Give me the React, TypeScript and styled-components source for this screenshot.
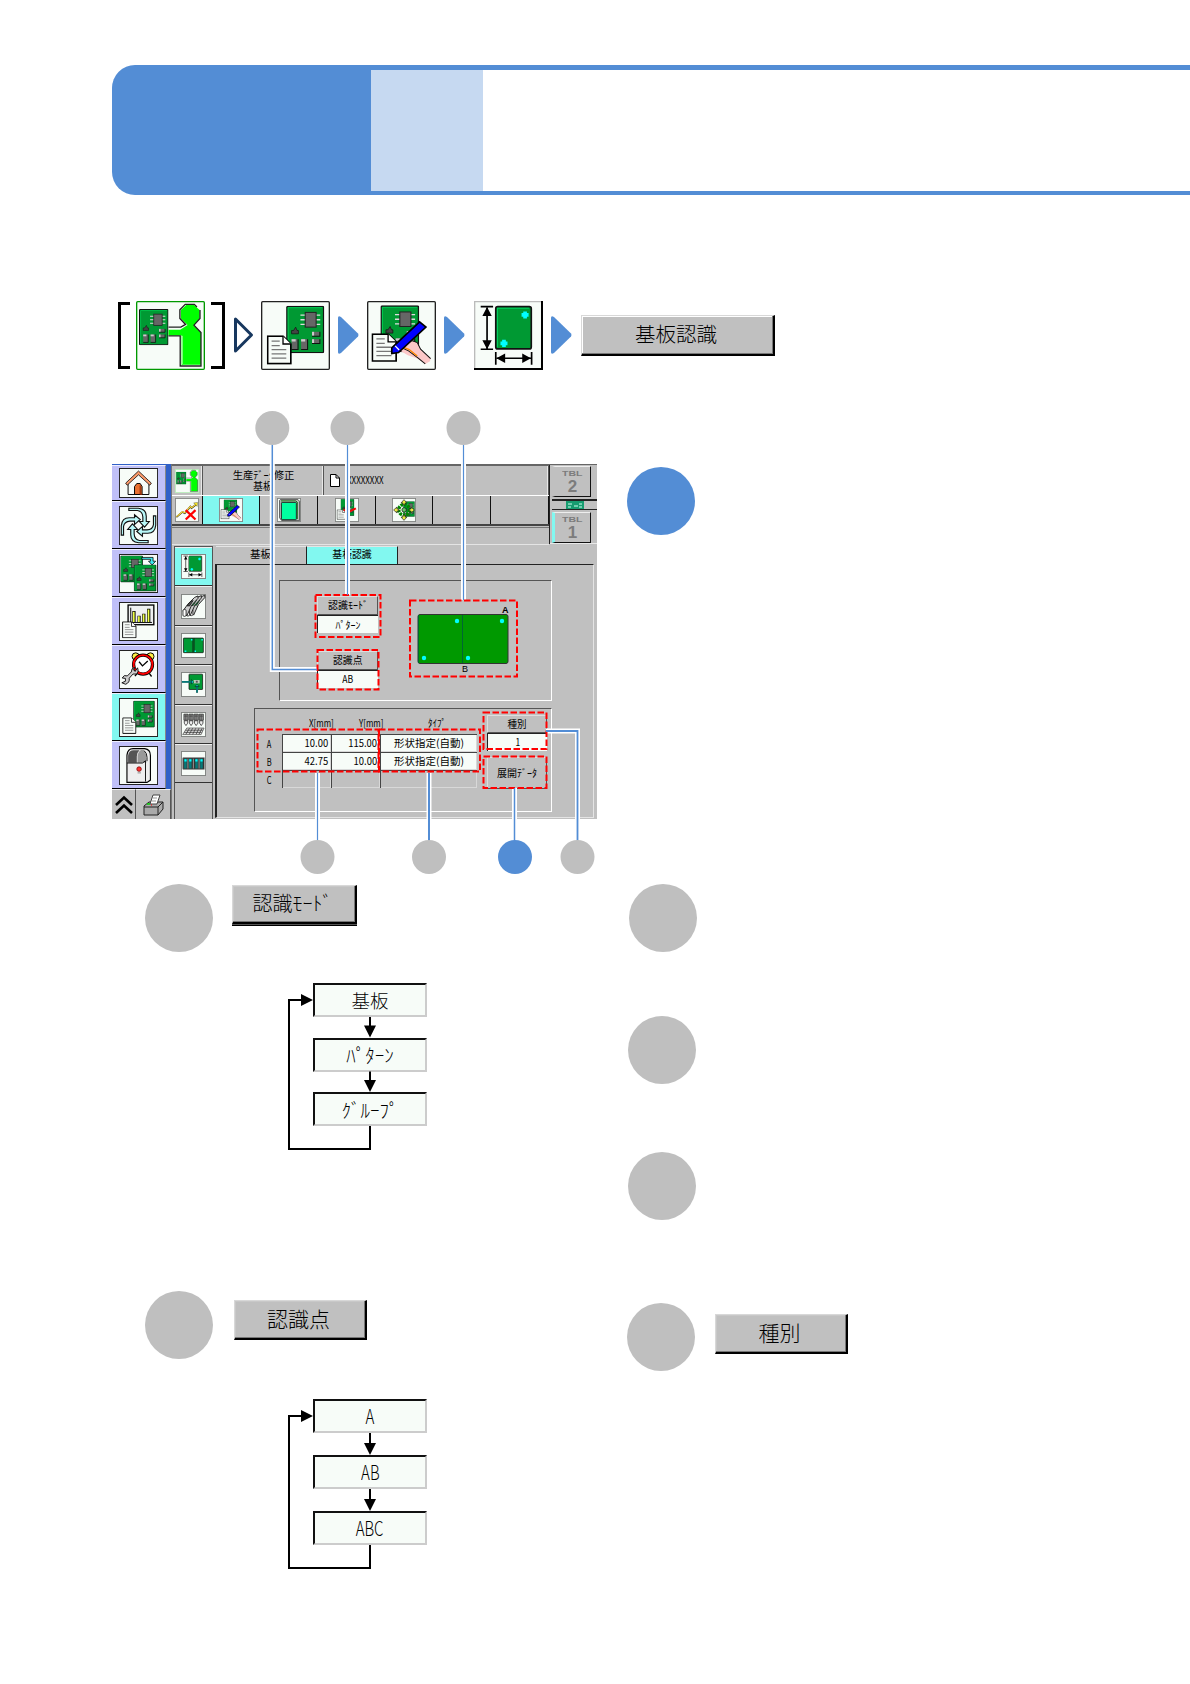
import React from "react";
import styled, { createGlobalStyle } from "styled-components";

const BLUE = "#538dd5";
const GRAY = "#bfbfbf";
const CYAN = "#82f8f0";
const PAPER = "#f7fcf8";

const Global = createGlobalStyle`
  * { box-sizing: border-box; }
  body { margin: 0; background: #fff; }
  svg { display: block; }
`;

const Page = styled.main`
  width: 1190px;
  height: 1684px;
  padding-top: 65px;
  overflow: hidden;
  background: #fff;
  color: #000;
  font-family: "Liberation Sans", "Noto Sans CJK JP", sans-serif;
`;

const Header = styled.header`
  display: flex;
  height: 130px;
  margin-left: 112px;
  border-radius: 23px 0 0 23px;
  overflow: hidden;
`;
const HeaderBlock = styled.div<{ $w: number }>`
  width: ${(p) => p.$w}px;
  background: ${BLUE};
`;
const HeaderStrip = styled.div`
  flex: 1;
  display: flex;
  border: solid ${BLUE};
  border-width: 5px 0 4px;
`;
const HeaderTint = styled.div`
  width: 112px;
  background: #c6d9f1;
`;

const Trail = styled.nav`
  display: flex;
  align-items: center;
  height: 70px;
  margin: 105px 0 0 118px;
`;
const Bracket = styled.span`
  width: 12px;
  height: 67px;
  border: 3px solid #000;
  border-right: 0;
`;
const CloseBracket = styled.span`
  width: 14px;
  height: 67px;
  margin-left: 6px;
  border: 3px solid #000;
  border-left: 0;
`;
const Slot = styled.span<{ $l: number }>`
  margin-left: ${(p) => p.$l}px;
`;

const Raised = styled.button<{ $w: number; $h: number; $deep?: boolean }>`
  display: flex;
  align-items: center;
  justify-content: center;
  width: ${(p) => p.$w}px;
  height: ${(p) => p.$h}px;
  padding: 0 3px 2px 0;
  border: solid #000;
  border-width: 1px 2px 2px 1px;
  border-top-color: #d8d8d8;
  border-left-color: #d8d8d8;
  background: #c0c0c0;
  box-shadow: inset -1px -1px 0 #777, inset 1px 1px 0 ${(p) => (p.$deep ? "#fff" : "#c8c8c8")};
  font: inherit;
  color: #000;
`;

const T = styled.span<{ $s: number; $x?: number; $o?: string; $b?: boolean }>`
  display: inline-block;
  flex: none;
  font-size: ${(p) => p.$s}px;
  font-weight: ${(p) => (p.$b ? 700 : p.$s < 12 ? 400 : 300)};
  line-height: 1;
  white-space: nowrap;
  font-family: ${(p) => (p.$b ? "" : '"Noto Sans CJK JP", ')}"Liberation Sans", sans-serif;
  transform: scaleX(${(p) => p.$x ?? 1});
  transform-origin: ${(p) => p.$o ?? "center"};
`;

const Columns = styled.div`
  display: grid;
  grid-template-columns: 516px 1fr;
  padding-left: 111px;
  margin-top: 41px;
`;
const Column = styled.div`
  display: flex;
  flex-direction: column;
`;
const Figure = styled.figure`
  position: relative;
  height: 463px;
  margin: 0;
  padding-top: 53px;
`;
const Overlay = styled.svg`
  position: absolute;
  left: 0;
  top: 0;
`;

const Screen = styled.section`
  display: flex;
  width: 485px;
  height: 355px;
  margin-left: 1px;
  background: #c0c0c0;
`;
const MainNav = styled.div`
  width: 59px;
  background: #3060c8;
  padding-top: 1px;
`;
const NavCell = styled.div<{ $h: number; $on?: boolean }>`
  display: flex;
  align-items: center;
  justify-content: center;
  width: 54px;
  height: ${(p) => p.$h}px;
  padding-right: 1px;
  border-bottom: 1px solid #000;
  border-top: 1px solid #eef;
  border-right: 1px solid #888;
  background: ${(p) => (p.$on ? CYAN : "#c0c0f8")};
`;
const NavFoot = styled.div`
  display: grid;
  grid-template-columns: 24px 35px;
  height: 30px;
  background: #c0c0c0;
`;
const FootCell = styled.div`
  display: flex;
  align-items: center;
  justify-content: center;
  border-right: 1px solid #555;
  border-top: 1px solid #eee;
`;
const Main = styled.div`
  flex: 1;
  min-width: 0;
  border-top: 1px solid #666;
  border-left: 1px solid #777;
`;
const Top = styled.div`
  display: flex;
  height: 79px;
`;
const TopLeft = styled.div`
  width: 378px;
  border-right: 1px solid #222;
`;
const TitleRow = styled.div`
  display: grid;
  grid-template-columns: 31px 121px 1fr;
  height: 31px;
  border-top: 1px solid #666;
  border-bottom: 1px solid #fff;
`;
const TitleCell = styled.div<{ $start?: boolean }>`
  display: flex;
  flex-direction: ${(p) => (p.$start ? "row" : "column")};
  align-items: center;
  justify-content: ${(p) => (p.$start ? "flex-start" : "center")};
  gap: ${(p) => (p.$start ? 7 : 0)}px;
  padding-left: ${(p) => (p.$start ? 6 : 0)}px;
  border-right: 1px solid #555;
  box-shadow: inset -1px 0 0 #e8e8e8;
`;
const Tools = styled.div`
  display: grid;
  grid-template-columns: 31px 57px 58px 58px 57px 58px 1fr;
  height: 30px;
  border-bottom: 2px solid #444;
`;
const Tool = styled.div<{ $on?: boolean }>`
  display: flex;
  align-items: center;
  justify-content: center;
  border-right: 1px solid #111;
  background: ${(p) => (p.$on ? CYAN : "#c0c0c0")};
`;
const Message = styled.div`
  height: 18px;
  margin-top: 1px;
  border-top: 1px solid #777;
  border-bottom: 1px solid #e4e4e4;
`;
const Tables = styled.div`
  flex: 1;
  border-bottom: 1px solid #e8e8e8;
  padding-left: 2px;
`;
const TableKey = styled.div<{ $on?: boolean }>`
  display: flex;
  flex-direction: column;
  align-items: center;
  width: 39px;
  height: 31px;
  margin-top: 1px;
  padding-top: 3px;
  border: solid #111;
  border-width: 1px 1px 1px 3px;
  border-top-color: #eee;
  border-left-color: ${(p) => (p.$on ? CYAN : "#c0c0c0")};
  color: #7c7c7c;
`;
const TableBar = styled.div`
  display: flex;
  justify-content: center;
  height: 11px;
  margin: 2px 0;
  border: solid #222;
  border-width: 2px 0 1px;
`;
const Body = styled.div`
  display: flex;
  height: 275px;
`;
const SubNav = styled.div`
  width: 39px;
  margin: 2px 2px 0 2px;
  border: solid #555;
  border-width: 1px 1px 0 1px;
`;
const SubCell = styled.div<{ $on?: boolean }>`
  display: flex;
  align-items: center;
  justify-content: center;
  height: 39.4px;
  border-bottom: 1px solid #333;
  border-top: 1px solid #eee;
  background: ${(p) => (p.$on ? CYAN : "#c0c0c0")};
`;
const Work = styled.div`
  width: 380px;
  padding-top: 2px;
`;
const Tabs = styled.div`
  display: flex;
  height: 18px;
  padding-left: 1px;
`;
const Tab = styled.div<{ $on?: boolean }>`
  display: flex;
  align-items: center;
  justify-content: center;
  width: 91px;
  padding: 0 1px 2px 0;
  border-top: 1px solid #e4e4e4;
  border-right: 1px solid #222;
  background: ${(p) => (p.$on ? CYAN : "#c0c0c0")};
`;
const Panel = styled.div`
  height: 254px;
  width: 379px;
  border: solid #222;
  border-width: 1px 1px 1px 2px;
  border-right-color: #e4e4e4;
  border-bottom-color: #e4e4e4;
  padding-top: 15px;
`;
const Frame = styled.div<{ $l: number; $w: number; $h: number; $t?: number }>`
  display: flex;
  width: ${(p) => p.$w}px;
  height: ${(p) => p.$h}px;
  margin: ${(p) => p.$t ?? 0}px 0 0 ${(p) => p.$l}px;
  border: 1px solid #555;
  border-right-color: #fff;
  border-bottom-color: #fff;
`;
const Settings = styled.div`
  display: flex;
  flex-direction: column;
  gap: 18px;
  margin: 15px 0 0 37px;
`;
const Setting = styled.div<{ $w: number }>`
  width: ${(p) => p.$w}px;
`;
const SettingKey = styled.div<{ $h?: number }>`
  display: flex;
  align-items: center;
  justify-content: center;
  height: ${(p) => p.$h ?? 19}px;
  border: 1px solid #555;
  border-top-color: #ddd;
  border-left-color: #ddd;
`;
const SettingValue = styled.div`
  display: flex;
  align-items: center;
  justify-content: center;
  height: 18px;
  border: solid #222;
  border-width: 1px 0 0 1px;
  background: ${PAPER};
`;
const Board = styled.svg`
  margin: 21px 0 0 36px;
`;
const Grid = styled.div`
  display: grid;
  grid-template-columns: 27px 49px 49px 97px;
  grid-template-rows: 25px 18px 18px 18px;
`;
const Cell = styled.div<{ $fill?: boolean; $box?: boolean; $end?: boolean }>`
  display: flex;
  align-items: center;
  justify-content: ${(p) => (p.$end ? "flex-end" : "center")};
  padding-right: ${(p) => (p.$end ? 3 : 0)}px;
  background: ${(p) => (p.$fill ? PAPER : "transparent")};
  border: solid ${(p) => (p.$box ? "#444" : "transparent")};
  border-width: 1px 0 0 1px;
  box-shadow: ${(p) => (p.$box ? "inset -1px -1px 0 #d8d8d8" : "none")};
`;
const HeadCell = styled.div<{ $l: number }>`
  display: flex;
  align-items: center;
  padding: 3px 0 0 ${(p) => p.$l}px;
`;
const Side = styled.div`
  display: flex;
  flex-direction: column;
  gap: 6px;
  margin: 6px 0 0 10px;
`;

const Section = styled.section<{ $t?: number; $l: number }>`
  display: flex;
  margin: ${(p) => p.$t ?? 0}px 0 0 ${(p) => p.$l}px;
`;
const Disc = styled.i<{ $c?: string }>`
  flex: none;
  width: 68px;
  height: 68px;
  border-radius: 50%;
  background: ${(p) => p.$c ?? GRAY};
`;
const Offset = styled.div<{ $l: number; $t: number }>`
  margin: ${(p) => p.$t}px 0 0 ${(p) => p.$l}px;
`;
const DoubleEdge = styled.div`
  height: 41px;
  background: #555;
  border-bottom: 1px solid #000;
`;
const Cycle = styled.div<{ $t: number; $g: number }>`
  position: relative;
  display: flex;
  flex-direction: column;
  gap: ${(p) => p.$g}px;
  margin: ${(p) => p.$t}px 0 0 202px;
`;
const Step = styled.div`
  display: flex;
  align-items: center;
  justify-content: center;
  width: 114px;
  height: 34px;
  border: 2px solid #111;
  border-right-color: #ccc;
  border-bottom-color: #ccc;
  background: ${PAPER};
`;
const CycleArrows = styled.svg`
  position: absolute;
  left: -30px;
  top: 0;
  overflow: visible;
`;

/* ---------- icons ---------- */

function Pcb({ x, y, w, h }: { x: number; y: number; w: number; h: number }) {
  const parts = [[76, 78, 22, 12], [76, 100, 22, 12], [16, 100, 18, 30], [44, 100, 18, 30]];
  return (
    <svg x={x} y={y} width={w} height={h} viewBox="0 0 112 142" preserveAspectRatio="none">
      <rect x="2" y="2" width="108" height="138" rx="3" fill="#009933" stroke="#111" strokeWidth="4" />
      <path d="M6 136V6H106" fill="none" stroke="#00e060" strokeWidth="2" />
      <path d="M42 28H100M42 42H100M42 56H100" stroke="#ddd" strokeWidth="4" />
      <rect x="56" y="20" width="32" height="44" fill="#666" stroke="#222" strokeWidth="3" />
      <path d="M16 84V74H22L28 64L32 74H36V84Z" fill="#444" stroke="#111" strokeWidth="2" />
      {parts.map(([a, b, c, d]) => (
        <g key={`${a}-${b}`}>
          <rect x={a} y={b} width={c} height={d} fill="#666" />
          <rect x={a} y={b} width={c > d ? 6 : c - 6} height={c > d ? d : 7} fill="#ccc" />
          <path d={`M${a} ${b + d + 1}H${a + c + 1}V${b}`} fill="none" stroke="#111" strokeWidth="3" />
        </g>
      ))}
    </svg>
  );
}

function Doc({ x, y, w, h }: { x: number; y: number; w: number; h: number }) {
  return (
    <svg x={x} y={y} width={w} height={h} viewBox="0 0 78 90" preserveAspectRatio="none">
      <path d="M3 3H50L74 27V87H3Z" fill={PAPER} stroke="#000" strokeWidth="5" />
      <path d="M50 3V27H74" fill="#fff" stroke="#000" strokeWidth="4" />
      <path d="M15 18H40M15 32H40M15 44H60M15 57H60M15 70H60" stroke="#777" strokeWidth="4" />
    </svg>
  );
}

function Tile({ size, h, children, kind = "thin" }: { size: number; h?: number; children?: React.ReactNode; kind?: string }) {
  const edge = kind === "green" ? "#009900" : kind === "pale" ? "#88e088" : "#222";
  const hh = h ? (206 * h) / size : 206;
  return (
    <svg width={size} height={h ?? size} viewBox={`0 0 206 ${hh}`}>
      <rect width="206" height={hh} fill={PAPER} />
      {children}
      {kind === "raised" ? (
        <>
          <path d={`M2 ${hh}V2H206`} fill="none" stroke="#bbb" strokeWidth="4" />
          <path d={`M0 ${hh - 3}H203V0`} fill="none" stroke="#000" strokeWidth="6" />
        </>
      ) : (
        <rect x="2" y="2" width="202" height={hh - 4} rx="3" fill="none" stroke={edge} strokeWidth={size > 50 ? 4 : 6} />
      )}
    </svg>
  );
}

const Operator = () => (
  <>
    <Pcb x={9} y={24} w={88} h={108} />
    <path d="M97 86H132L154 72L134 52V27L150 12H173L190 27V52L172 73L194 94V190H136V103H97Z" fill="#0f0" />
    <path d="M97 78H134L148 70L131 52V26L147 10H174L182 18M97 104H132V194H194V94L173 72L191 52V27" fill="none" stroke="#222" strokeWidth="4" />
    <path d="M138 188V104" stroke="#fff" strokeWidth="2" />
  </>
);
const PcbDoc = () => (
  <>
    <Pcb x={75} y={14} w={114} h={142} />
    <Doc x={17} y={102} w={76} h={88} />
  </>
);
const Edit = () => (
  <>
    <Pcb x={40} y={13} w={116} h={140} />
    <Doc x={13} y={96} w={78} h={86} />
    <path d="M93 136L112 132L134 120L150 124L160 144L190 172L188 180L174 188L150 172L122 162L98 148Z" fill="#fcc8c8" />
    <path d="M96 136L124 149L152 170L174 188M136 119L150 124L160 144L190 172" fill="none" stroke="#111" strokeWidth="3" />
    <path d="M98 134L126 145L150 164" fill="none" stroke="#f80" strokeWidth="4" />
    <path d="M157 62L176 78L94 154L74 157V140Z" fill="#00f" stroke="#000" strokeWidth="5" />
    <path d="M84 134L96 146" stroke="#fff" strokeWidth="4" />
  </>
);
const Dimensions = () => (
  <>
    <rect x="65" y="17" width="106" height="126" rx="6" fill="#009933" stroke="#111" strokeWidth="5" />
    <path d="M70 138V22H164" fill="none" stroke="#00d060" strokeWidth="3" />
    <path d="M147 31H158V36H163V47H158V52H147V47H142V36H147ZM84 116H95V121H100V132H95V137H84V132H79V121H84Z" fill="#0ff" />
    <path d="M20 17H57M20 144H57M39 20V142M65 152V190M172 152V190M68 171H170" stroke="#000" strokeWidth="5" />
    <path d="M39 18L53 45H25ZM39 144L53 117H25ZM67 171L93 157V185ZM170 171L144 157V185Z" fill="#000" />
  </>
);
const Home = () => (
  <>
    <path d="M48 85V140H158V85" fill={PAPER} stroke="#000" strokeWidth="5" />
    <path d="M103 16L171 80L163 91L103 36L43 91L35 80Z" fill="#fb9a6a" stroke="#000" strokeWidth="4" />
    <path d="M82 140V98L94 82H112L122 98V140Z" fill="#e87030" stroke="#000" strokeWidth="5" />
    <path d="M112 92V140H122" fill="none" stroke="#852000" strokeWidth="5" />
  </>
);
const Arrows = () => (
  <>
    {[0, 90, 180, 270].map((r) => (
      <path key={r} transform={`rotate(${r} 103 103)`} d="M52 12H102Q144 16 144 54V82H160L135 112L108 82H126V58Q124 28 98 24H52Z" fill="#b8f8f8" stroke="#111" strokeWidth="6" />
    ))}
  </>
);
const Copy = () => (
  <>
    <Pcb x={7} y={8} w={120} h={142} />
    <Pcb x={78} y={56} w={120} h={142} />
    <path d="M120 18H180V38H194L175 58L156 38H166V28H120Z" fill="#3fe8f0" stroke="#000" strokeWidth="4" />
  </>
);
const Report = () => (
  <>
    <rect x="48" y="16" width="136" height="104" fill="#eef0f0" stroke="#000" strokeWidth="7" />
    <path d="M62 30V108H174" fill="none" stroke="#000" strokeWidth="5" />
    <path d="M79 107V48M106 107V72M131 107V62M157 107V36" stroke="#000" strokeWidth="17" />
    <path d="M78 105V51M105 105V75M130 105V65M156 105V39" stroke="#ef4" strokeWidth="9" />
    <Doc x={16} y={102} w={78} h={90} />
  </>
);
const Maintenance = () => (
  <>
    <circle cx="88" cy="34" r="19" fill="#fe4" stroke="#000" strokeWidth="5" />
    <circle cx="166" cy="34" r="19" fill="#fe4" stroke="#000" strokeWidth="5" />
    <circle cx="127" cy="77" r="50" fill="#fff" stroke="#000" strokeWidth="17" />
    <circle cx="127" cy="77" r="50" fill="none" stroke="#f00" strokeWidth="10" />
    <path d="M106 62L124 84L152 58M96 124L84 138M160 124L172 140" fill="none" stroke="#000" strokeWidth="7" />
    <path d="M98 94Q106 118 91 127L74 127L54 149Q58 172 35 181L15 173L34 165L34 150L17 148Q26 128 44 137L65 116Q64 95 84 92L77 105L85 113Z" fill="#ccc" stroke="#111" strokeWidth="5" />
  </>
);
const Machine = () => (
  <>
    <path d="M42 48Q46 14 74 14H136Q166 18 166 50V180L148 192H42Z" fill="#eee" stroke="#000" strokeWidth="6" />
    <path d="M48 88V50Q52 22 78 22H108Q94 34 94 56V88Z" fill="#555" />
    <path d="M98 88V52Q104 22 122 20Q142 24 144 56V88Z" fill="#999" />
    <path d="M42 90H124L140 78V188M132 24Q148 36 148 60V80" fill="none" stroke="#111" strokeWidth="5" />
    <circle cx="106" cy="122" r="12" fill="#f33" stroke="#700" strokeWidth="4" />
    <path d="M98 142H116" stroke="#888" strokeWidth="5" />
  </>
);
const Analysis = () => (
  <>
    <path d="M12 164L64 120L84 130L132 74L142 86L186 52" fill="none" stroke="#222" strokeWidth="14" />
    <path d="M12 162L64 118L84 128L132 72L142 84L186 50" fill="none" stroke="#fd3" strokeWidth="9" />
    <path d="M160 42L194 38L190 72Z" fill="#fe2" stroke="#222" strokeWidth="3" />
    <path d="M92 104L176 184M176 104L92 184" stroke="#f00" strokeWidth="19" />
  </>
);
const Panels = () => (
  <>
    <path d="M30 12H178L194 28V194H40L22 170V20Z" fill="#bbb" stroke="#222" strokeWidth="6" />
    <path d="M34 25H160L174 36V180" fill="none" stroke="#060" strokeWidth="8" />
    <rect x="38" y="38" width="128" height="148" rx="6" fill="#00ffa0" stroke="#111" strokeWidth="7" />
  </>
);
const Check = () => (
  <>
    <Pcb x={48} y={8} w={118} h={146} />
    <Doc x={14} y={98} w={80} h={88} />
    <path d="M68 102L98 124L92 178L118 126L184 96L174 82L110 116L80 94Z" fill="#f00" />
    <path d="M92 178L99 150" stroke="#222" strokeWidth="7" />
  </>
);
const Optimize = () => (
  <>
    <Pcb x={96} y={28} w={100} h={134} />
    <circle cx="104" cy="102" r="46" fill="none" stroke="#080" strokeWidth="30" strokeDasharray="22 8" />
    {[0, 90, 180, 270].map((r) => (
      <path key={r} transform={`rotate(${r} 103 103)`} d="M103 14L128 42H112V57H94V42H78Z" fill="#ee4" stroke="#222" strokeWidth="6" />
    ))}
    <circle cx="104" cy="102" r="19" fill="#6c6" stroke="#222" strokeWidth="7" />
  </>
);
const Feeders = () => (
  <>
    {[2, 1, 0].map((n) => (
      <g key={n} transform={`translate(${n * 28} ${n * -3})`}>
        <path d="M16 140L56 84L112 28L140 16V36L88 92L48 180Z" fill="#ccc" stroke="#222" strokeWidth="8" />
        <path d="M50 98L76 64L100 54L72 98Z" fill={n === 0 ? "#555" : "#0a3"} stroke="#111" strokeWidth="6" />
        <rect x="16" y="128" width="26" height="56" rx="10" fill="#fff" stroke="#222" strokeWidth="7" />
      </g>
    ))}
  </>
);
const Pattern = () => (
  <>
    <rect x="20" y="42" width="164" height="120" rx="4" fill="#009933" stroke="#111" strokeWidth="6" />
    <path d="M98 44V160M108 44V160" stroke="#111" strokeWidth="6" />
    <path d="M30 144H44V156H30ZM82 50H94V62H82ZM112 144H124V156H112ZM168 50H180V62H168Z" fill="#0ff" />
  </>
);
const Placement = () => (
  <>
    <rect x="66" y="18" width="112" height="126" rx="4" fill="#009933" stroke="#111" strokeWidth="6" />
    <rect x="104" y="66" width="50" height="28" fill="#bcb" />
    <path d="M122 72H138V88H122Z" fill="#555" />
    <path d="M8 82H90M132 170V114" stroke="#111" strokeWidth="15" />
    <path d="M8 82H90M132 170V118" stroke="#0ee" strokeWidth="7" />
    <path d="M86 64L104 82L86 100ZM116 120L132 102L148 120Z" fill="#0ee" stroke="#111" strokeWidth="5" />
  </>
);
const Nozzles = () => (
  <>
    {[24, 66, 108, 150].map((x) => (
      <g key={x} transform={`translate(${x} 0)`}>
        <path d="M0 18H34V68H0Z" fill="#999" stroke="#222" strokeWidth="6" />
        <path d="M16 20V68M3 34H30" stroke="#444" strokeWidth="7" />
        <path d="M3 72H31V92L17 112L3 92Z" fill="#eee" stroke="#222" strokeWidth="6" />
      </g>
    ))}
    <path d="M48 132H190L166 186H14Z" fill="#ddd" stroke="#333" strokeWidth="5" />
    <path d="M36 150H180M26 168H170M70 134L40 184M96 134L68 184M122 134L96 184M148 134L124 184M174 134L148 184" stroke="#333" strokeWidth="6" />
  </>
);
const Conveyor = () => (
  <>
    <rect x="14" y="54" width="180" height="98" rx="6" fill="#333" stroke="#999" strokeWidth="8" />
    <path d="M36 64V144M77 64V144M128 64V144M169 64V144" stroke="#087878" strokeWidth="21" />
    <path d="M57 64V144M102 64V144M149 64V144" stroke="#999" strokeWidth="8" />
    <path d="M28 68H46V86H28ZM68 68H86V86H68ZM118 68H136V86H118ZM160 68H178V86H160Z" fill="#0ff" />
  </>
);

const Triangle = ({ hollow }: { hollow?: boolean }) => (
  <svg width="22" height="40" viewBox="0 0 22 40">
    {hollow ? (
      <path d="M2.5 4V36L18.5 20Z" fill="#fff" stroke="#17375e" strokeWidth="3" strokeLinejoin="round" />
    ) : (
      <path d="M1 3Q1 0 4 2L21 18.5Q22 20 21 21.5L4 38Q1 40 1 37Z" fill={BLUE} />
    )}
  </svg>
);

/* ---------- parts ---------- */

const navItems = [
  { h: 36, art: <Home /> },
  { h: 48, art: <Arrows /> },
  { h: 48, art: <Copy /> },
  { h: 48, art: <Report /> },
  { h: 48, art: <Maintenance /> },
  { h: 48, art: <PcbDoc />, on: true },
  { h: 48, art: <Machine /> },
];
const toolItems = [<Edit />, <Panels />, <Check />, <Optimize />];
const subItems = [<Dimensions />, <Feeders />, <Pattern />, <Placement />, <Nozzles />, <Conveyor />];
const rows = [
  ["A", "10.00", "115.00"],
  ["B", "42.75", "10.00"],
];

function MachineScreen() {
  return (
    <Screen>
      <MainNav>
        {navItems.map((n, i) => (
          <NavCell key={i} $h={n.h} $on={n.on}>
            <Tile size={39} h={i === 0 ? 30 : 39}>{n.art}</Tile>
          </NavCell>
        ))}
        <NavFoot>
          <FootCell>
            <svg width="18" height="20" viewBox="0 0 18 20">
              <path d="M1 10L9 2.5L17 10M1 18L9 10.5L17 18" fill="none" stroke="#000" strokeWidth="2.6" />
            </svg>
          </FootCell>
          <FootCell>
            <svg width="21" height="22" viewBox="0 0 21 22">
              <path d="M1 12L6 8H20V15L15 21H1Z" fill="#aaa" stroke="#222" />
              <path d="M1 13H15L20 8M15 13V21" fill="none" stroke="#222" />
              <path d="M7 10L10 1H17L14 10Z" fill="#fff" stroke="#444" />
              <path d="M10 4H14M9 7H13" stroke="#999" />
              <path d="M4 10H7" stroke="#0c0" strokeWidth="1.5" />
              <path d="M8 11H9" stroke="#f00" />
            </svg>
          </FootCell>
        </NavFoot>
      </MainNav>
      <Main>
        <Top>
          <TopLeft>
            <TitleRow>
              <TitleCell><Tile size={24} kind="pale"><Operator /></Tile></TitleCell>
              <TitleCell>
                <T $s={10.5} $x={0.98}>生産ﾃﾞｰﾀ修正</T>
                <T $s={10}>基板</T>
              </TitleCell>
              <TitleCell $start>
                <svg width="10" height="13" viewBox="0 0 10 13">
                  <path d="M.5 .5H6L9.5 4V12.5H.5Z" fill="#fff" stroke="#000" />
                  <path d="M6 .5V4H9.5" fill="none" stroke="#000" />
                </svg>
                <T $s={10.5} $x={0.76} $o="left">XXXXXXXX</T>
              </TitleCell>
            </TitleRow>
            <Tools>
              <Tool><Tile size={24}><Analysis /></Tile></Tool>
              {toolItems.map((t, i) => (
                <Tool key={i} $on={i === 0}><Tile size={24}>{t}</Tile></Tool>
              ))}
              <Tool />
              <Tool />
            </Tools>
            <Message />
          </TopLeft>
          <Tables>
            <TableKey><T $s={7.5} $x={1.4} $b>TBL</T><T $s={17} $b>2</T></TableKey>
            <TableBar>
              <svg width="18" height="8" viewBox="0 0 18 8">
                <rect width="18" height="8" fill="#179c70" />
                <path d="M2 3H6M2 6H5M8 5H12M13 3H16M13 6H16" stroke="#cfe" />
              </svg>
            </TableBar>
            <TableKey $on><T $s={7.5} $x={1.4} $b>TBL</T><T $s={17} $b>1</T></TableKey>
          </Tables>
        </Top>
        <Body>
          <SubNav>
            {subItems.map((s, i) => (
              <SubCell key={i} $on={i === 0}><Tile size={25}>{s}</Tile></SubCell>
            ))}
          </SubNav>
          <Work>
            <Tabs>
              <Tab><T $s={10.5}>基板</T></Tab>
              <Tab $on><T $s={10.5} $x={0.94}>基板認識</T></Tab>
            </Tabs>
            <Panel>
              <Frame $l={62} $w={273} $h={121}>
                <Settings>
                  <Setting $w={61}>
                    <SettingKey><T $s={10.5} $x={0.95}>認識ﾓｰﾄﾞ</T></SettingKey>
                    <SettingValue><T $s={10}>ﾊﾟﾀｰﾝ</T></SettingValue>
                  </Setting>
                  <Setting $w={61}>
                    <SettingKey><T $s={10.5} $x={0.93}>認識点</T></SettingKey>
                    <SettingValue><T $s={10.5} $x={0.82}>AB</T></SettingValue>
                  </Setting>
                </Settings>
                <Board width="98" height="74" viewBox="0 0 98 74">
                  <rect x="4" y="12.5" width="90" height="49" rx="2" fill="#009900" stroke="#333" />
                  <path d="M4.5 61V13M48.5 13V61" stroke="#063" />
                  {[[43, 19], [88, 19], [10, 56], [54, 56]].map(([x, y]) => (
                    <circle key={x} cx={x} cy={y} r="2.2" fill="#0ff" />
                  ))}
                  <text x="88" y="11" fontSize="9" fontFamily="Liberation Sans" fontWeight="700">A</text>
                  <text x="48" y="70" fontSize="9" fontFamily="Liberation Sans">B</text>
                </Board>
              </Frame>
              <Frame $l={37} $w={298} $h={104} $t={7}>
                <Grid>
                  <Cell />
                  <HeadCell $l={27}><T $s={10} $x={0.8} $o="left">X[mm]</T></HeadCell>
                  <HeadCell $l={28}><T $s={10} $x={0.8} $o="left">Y[mm]</T></HeadCell>
                  <HeadCell $l={48}><T $s={10} $x={0.9} $o="left">ﾀｲﾌﾟ</T></HeadCell>
                  {rows.map(([n, x, y]) => (
                    <React.Fragment key={n}>
                      <Cell><T $s={10} $x={0.75}>{n}</T></Cell>
                      <Cell $fill $box $end><T $s={10.5} $x={0.9} $o="right">{x}</T></Cell>
                      <Cell $fill $box $end><T $s={10.5} $x={0.9} $o="right">{y}</T></Cell>
                      <Cell $fill $box><T $s={10.5}>形状指定(自動)</T></Cell>
                    </React.Fragment>
                  ))}
                  <Cell><T $s={10} $x={0.75}>C</T></Cell>
                  <Cell $box />
                  <Cell $box />
                  <Cell $box />
                </Grid>
                <Side>
                  <Setting $w={60}>
                    <SettingKey $h={18}><T $s={10} $x={0.95}>種別</T></SettingKey>
                    <SettingValue><T $s={10.5} $x={0.8}>1</T></SettingValue>
                  </Setting>
                  <Setting $w={60}>
                    <SettingKey $h={32}><T $s={10}>展開ﾃﾞｰﾀ</T></SettingKey>
                  </Setting>
                </Side>
              </Frame>
            </Panel>
          </Work>
        </Body>
      </Main>
    </Screen>
  );
}

const leaders = [
  { d: "M272.3 445V669.5H317", w: 1.5 },
  { d: "M347.5 445V595", w: 1.2 },
  { d: "M463.5 445V600", w: 1.2 },
  { d: "M317.5 773V841", w: 1.2 },
  { d: "M429 773V841", w: 2 },
  { d: "M514.5 788V841", w: 1.5 },
  { d: "M546 731H577.5V841", w: 1.8 },
];
const outlines = [
  [315.5, 595, 65, 42],
  [317.5, 650, 61, 39.5],
  [410, 600.5, 107, 76],
  [257.5, 729.5, 121, 42],
  [379, 729.5, 101, 42],
  [483.5, 712.5, 63, 36.5],
  [483.5, 756.5, 63, 31.5],
];
const marks: [number, number, string][] = [
  [272.3, 428, GRAY],
  [347.5, 428, GRAY],
  [463.5, 428, GRAY],
  [317.5, 857, GRAY],
  [429, 857, GRAY],
  [515, 857, BLUE],
  [577.5, 857, GRAY],
];

function Callouts() {
  return (
    <Overlay width="516" height="463" viewBox="111 411 516 463">
      {leaders.map(({ d }) => (
        <path key={d} d={d} fill="none" stroke="#fff" strokeWidth="5" />
      ))}
      {outlines.map(([x, y, w, h]) => (
        <rect key={`${x}${y}`} x={x} y={y} width={w} height={h} fill="none" stroke="#f00" strokeWidth="2" strokeDasharray="6.5 2.5" />
      ))}
      {leaders.map(({ d, w }) => (
        <path key={d} d={d} fill="none" stroke={BLUE} strokeWidth={w} />
      ))}
      {marks.map(([x, y, c]) => (
        <circle key={x} cx={x} cy={y} r="17" fill={c} />
      ))}
    </Overlay>
  );
}

function Loop({ gap, steps, top, end }: { gap: number; steps: React.ReactNode[]; top: number; end: number }) {
  const pitch = 34 + gap;
  return (
    <Cycle $t={top} $g={gap}>
      {steps.map((s, i) => (
        <Step key={i}>{s}</Step>
      ))}
      <CycleArrows width="144" height={end} viewBox={`0 0 144 ${end}`}>
        {[0, 1].map((i) => (
          <g key={i}>
            <path d={`M87 ${34 + i * pitch}v14`} stroke="#000" strokeWidth="2" />
            <path d={`M81 ${pitch * (i + 1) - 12}h12l-6 12z`} />
          </g>
        ))}
        <path d={`M87 ${34 + pitch * 2}V${end}H6V17H20`} fill="none" stroke="#000" strokeWidth="2" />
        <path d="M18 11L30 17L18 23Z" />
      </CycleArrows>
    </Cycle>
  );
}

export default function App() {
  return (
    <Page>
      <Global />
      <Header>
        <HeaderBlock $w={259} />
        <HeaderStrip>
          <HeaderTint />
        </HeaderStrip>
      </Header>
      <Trail>
        <Bracket />
        <Slot $l={6}><Tile size={69} kind="green"><Operator /></Tile></Slot>
        <CloseBracket />
        <Slot $l={8}><Triangle hollow /></Slot>
        <Slot $l={6}><Tile size={69}><PcbDoc /></Tile></Slot>
        <Slot $l={7}><Triangle /></Slot>
        <Slot $l={8}><Tile size={69}><Edit /></Tile></Slot>
        <Slot $l={7}><Triangle /></Slot>
        <Slot $l={9}><Tile size={69} kind="raised"><Dimensions /></Tile></Slot>
        <Slot $l={7}><Triangle /></Slot>
        <Slot $l={9}>
          <Raised $w={194} $h={41} $deep><T $s={20.5}>基板認識</T></Raised>
        </Slot>
      </Trail>
      <Columns>
        <Column>
          <Figure>
            <MachineScreen />
            <Callouts />
          </Figure>
          <Section $t={9.5} $l={34}>
            <Disc />
            <Offset $l={19} $t={1}>
              <DoubleEdge>
                <Raised $w={125} $h={39}><T $s={20}>認識ﾓｰﾄﾞ</T></Raised>
              </DoubleEdge>
            </Offset>
          </Section>
          <Loop top={31.5} gap={20.5} end={166} steps={[<T $s={18.5}>基板</T>, <T $s={19}>ﾊﾟﾀｰﾝ</T>, <T $s={19}>ｸﾞﾙｰﾌﾟ</T>]} />
          <Section $t={164.5} $l={34}>
            <Disc />
            <Offset $l={21} $t={9}>
              <Raised $w={133} $h={40}><T $s={21}>認識点</T></Raised>
            </Offset>
          </Section>
          <Loop top={40} gap={22} end={169} steps={[<T $s={20} $x={0.75}>A</T>, <T $s={20} $x={0.75}>AB</T>, <T $s={20} $x={0.75}>ABC</T>]} />
        </Column>
        <Column>
          <Section $t={55.5} $l={0}><Disc $c={BLUE} /></Section>
          <Section $t={349} $l={2}><Disc /></Section>
          <Section $t={64} $l={1}><Disc /></Section>
          <Section $t={68} $l={1}><Disc /></Section>
          <Section $t={83} $l={0}>
            <Disc />
            <Offset $l={20} $t={11}>
              <Raised $w={133} $h={40}><T $s={21}>種別</T></Raised>
            </Offset>
          </Section>
        </Column>
      </Columns>
    </Page>
  );
}
